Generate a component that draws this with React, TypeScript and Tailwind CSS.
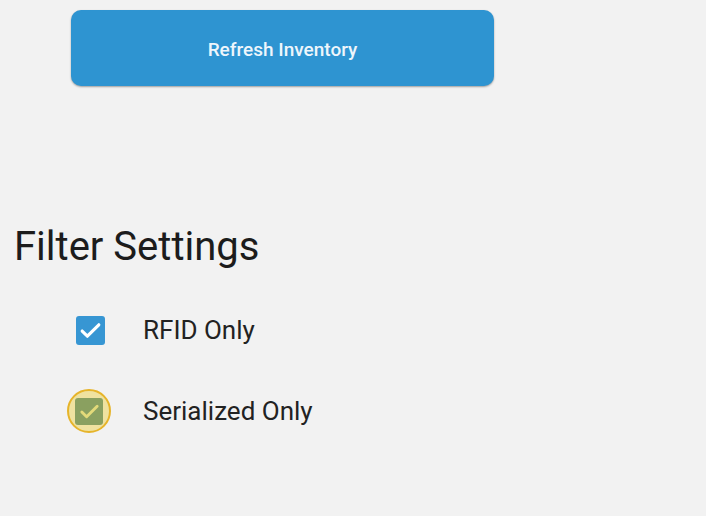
export default function App() {
  return (
    <main className="h-[516px] w-[706px] overflow-hidden bg-[#f2f2f2] font-['Roboto',sans-serif]">
      <div className="pl-[71px] pt-[10px]">
        <button className="flex h-[76px] w-[423px] items-center justify-center rounded-[10px] bg-[#2e94d1] pt-[5px] text-[19px] font-medium text-[#eef6fc] shadow-[0_1px_2px_rgba(0,0,0,0.35)]">
          Refresh Inventory
        </button>
      </div>

      <h2 className="mt-[137px] pl-[14px] text-[40px] leading-[48px] text-[#1c1c1c]">
        Filter Settings
      </h2>

      <div className="mt-[40px] flex items-center gap-[38px] pl-[76px]">
        <div className="flex h-[29px] w-[29px] items-center justify-center rounded-[3px] bg-[#3796d3]">
          <svg width="25" height="25" viewBox="0 0 24 24" fill="none">
            <path d="M4 12.5l5 5L20 6.5" stroke="#fff" strokeWidth="3" strokeLinecap="round" strokeLinejoin="round" />
          </svg>
        </div>
        <span className="text-[26px] text-[#222]">RFID Only</span>
      </div>

      <div className="mt-[39px] flex items-center gap-[32px] pl-[67px]">
        <div className="flex h-[44px] w-[44px] items-center justify-center rounded-full border-2 border-[#e6b42a] bg-[#efe2a0]">
          <div className="flex h-[27px] w-[28px] items-center justify-center rounded-[3px] bg-[#8aa060]">
            <svg width="23" height="23" viewBox="0 0 24 24" fill="none">
              <path d="M4 12.5l5 5L20 6.5" stroke="#e3da7a" strokeWidth="3" strokeLinecap="round" strokeLinejoin="round" />
            </svg>
          </div>
        </div>
        <span className="text-[26px] text-[#222]">Serialized Only</span>
      </div>
    </main>
  );
}
